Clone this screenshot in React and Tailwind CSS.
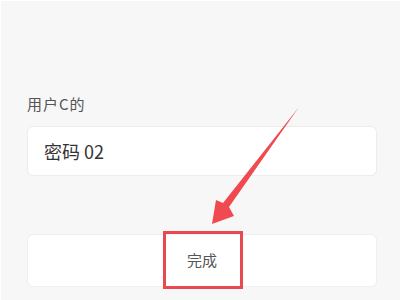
import React from 'react';

const font = { fontFamily: '"Noto Sans CJK SC", "Noto Sans", sans-serif' };

export default function App() {
  return (
    <div
      className="relative w-[400px] h-[300px] overflow-hidden bg-[#f7f7f7] border-t border-l border-white"
      style={font}
    >
      <div className="flex flex-col pl-[26px] pr-[23px] pt-[92px]">
        <div className="text-[15px] leading-[22px] text-[#555] tracking-[1px]">用户C的</div>
        <div className="mt-[11px] h-[50px] rounded-[6px] bg-white border border-[#ececec] flex items-center px-[16px]">
          <span className="text-[18px] text-[#333]">密码 02</span>
        </div>
        <div className="mt-[58px] h-[53px] rounded-[6px] bg-white border border-[#efefef] flex items-center justify-center">
          <span className="text-[15px] text-[#555]">完成</span>
        </div>
      </div>

      {/* highlight box */}
      <div className="absolute left-[162px] top-[230px] w-[80px] h-[58px] border-[3px] border-[#e8484f]" />

      {/* arrow */}
      <svg className="absolute left-0 top-0" width="400" height="300" viewBox="0 0 400 300">
        <polygon
          points="298,106 228,206 233,215 211,223 215,199 222,202"
          fill="#f04a50"
        />
      </svg>
    </div>
  );
}
